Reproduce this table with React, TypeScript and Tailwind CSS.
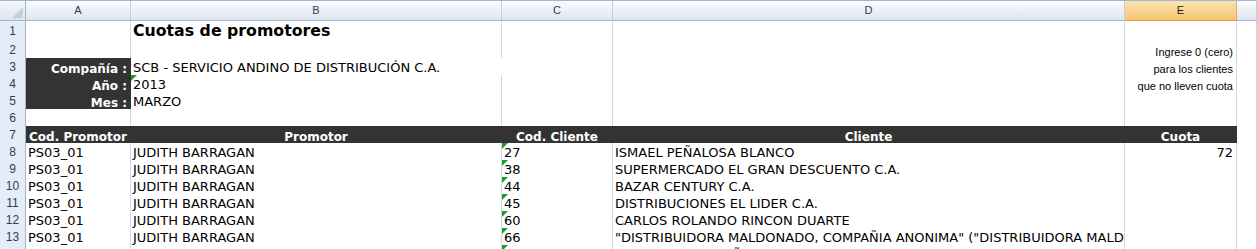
import React from "react";

type Cell = {
  text?: string;
  align?: "left" | "right" | "center";
  bold?: boolean;
  dark?: boolean;
  span?: boolean;
  tri?: boolean;
  kind?: "data" | "title" | "note";
};

const GRID = "grid grid-cols-[26px_105px_371px_111px_512px_112px_1fr]";
const DATA_FONT = { fontFamily: '"DejaVu Sans", Verdana, sans-serif' };
const NOTE_FONT = { fontFamily: '"Liberation Sans", Arial, sans-serif' };

function Triangle() {
  return (
    <svg className="absolute left-0 top-0" width="6" height="6" viewBox="0 0 6 6">
      <polygon points="0,0 6,0 0,6" fill="#1f9a2d" />
    </svg>
  );
}

function CellView({ c }: { c: Cell }) {
  const align =
    c.align === "right" ? "justify-end pr-[3px]" : c.align === "center" ? "justify-center" : "justify-start pl-[2px]";
  const colors = c.dark ? "bg-[#333333] border-[#333333] text-white" : "bg-white border-[#d0d7e5] text-black";
  const size =
    c.kind === "title"
      ? "text-[15.75px] font-bold leading-[19px]"
      : c.kind === "note"
      ? "text-[11px] leading-[13px]"
      : c.bold
      ? "text-[12px] font-bold leading-[14px]"
      : "text-[13px] leading-[15px]";
  const pad = c.kind === "title" ? "pb-[1px]" : c.kind === "note" ? "" : c.bold ? "" : "pb-[1px]";
  return (
    <div
      className={`relative flex items-end overflow-x-clip whitespace-nowrap border-r border-b ${colors} ${align} ${size} ${
        c.span ? "col-span-2" : ""
      }`}
      style={c.kind === "note" ? NOTE_FONT : DATA_FONT}
    >
      {c.tri && <Triangle />}
      <span className={pad}>{c.text ?? ""}</span>
    </div>
  );
}

function RowHeader({ n }: { n: number }) {
  return (
    <div
      className="flex items-center justify-center border-r border-b border-r-[#9eb6ce] border-b-[#c9d6e6] bg-[#e4ecf7] text-[12px] text-[#2f3e52]"
      style={NOTE_FONT}
    >
      {n}
    </div>
  );
}

function Row({ n, h, cells }: { n: number; h: string; cells: Cell[] }) {
  return (
    <div className={`${GRID} ${h}`}>
      <RowHeader n={n} />
      {cells.map((c, i) => (
        <CellView key={i} c={c} />
      ))}
    </div>
  );
}

const E: Cell = {};

const dataRows: { n: number; cod: string; cli: string; cuota?: string }[] = [
  { n: 8, cod: "27", cli: "ISMAEL PEÑALOSA BLANCO", cuota: "72" },
  { n: 9, cod: "38", cli: "SUPERMERCADO EL GRAN DESCUENTO C.A." },
  { n: 10, cod: "44", cli: "BAZAR CENTURY C.A." },
  { n: 11, cod: "45", cli: "DISTRIBUCIONES EL LIDER C.A." },
  { n: 12, cod: "60", cli: "CARLOS ROLANDO RINCON DUARTE" },
  {
    n: 13,
    cod: "66",
    cli: '"DISTRIBUIDORA MALDONADO, COMPAÑIA ANONIMA" ("DISTRIBUIDORA MALDONADO, C.A.")',
  },
  { n: 14, cod: "71", cli: "COMERCIAL LA PEÑA C.A." },
];

export default function App() {
  const colHead = (label: string, selected = false) => (
    <div
      key={label}
      className={`flex items-center justify-center border-r border-b text-[11px] ${
        selected
          ? "bg-linear-to-b from-[#fbe3b4] to-[#f3c56e] border-r-[#e7a95a] border-b-[#e79b45] text-[#1a1a1a]"
          : "bg-linear-to-b from-[#fafcfe] to-[#dde5ef] border-r-[#c3cfdf] border-b-[#9eb6ce] text-[#333d4a]"
      }`}
      style={NOTE_FONT}
    >
      {label}
    </div>
  );

  return (
    <div className="w-[1257px] h-[249px] overflow-hidden bg-white">
      {/* column headers */}
      <div className={`${GRID} h-[21px] border-t border-t-[#9eb6ce]`}>
        <div className="relative border-r border-b border-r-[#9eb6ce] border-b-[#9eb6ce] bg-linear-to-b from-[#f3f6fa] to-[#dce4ee]">
          <svg className="absolute right-[2px] bottom-[2px]" width="11" height="11" viewBox="0 0 11 11">
            <polygon points="11,0 11,11 0,11" fill="#c3cfdd" />
          </svg>
        </div>
        {colHead("A")}
        {colHead("B")}
        {colHead("C")}
        {colHead("D")}
        {colHead("E", true)}
        {colHead("")}
      </div>

      <Row n={1} h="h-[20px]" cells={[E, { text: "Cuotas de promotores", kind: "title", bold: true }, E, E, E, E]} />
      <Row
        n={2}
        h="h-[17px]"
        cells={[E, E, E, E, { text: "Ingrese 0 (cero)", kind: "note", align: "right" }, E]}
      />
      <Row
        n={3}
        h="h-[17px]"
        cells={[
          { text: "Compañía :", dark: true, bold: true, align: "right" },
          { text: "SCB - SERVICIO ANDINO DE DISTRIBUCIÓN C.A.", span: true },
          E,
          { text: "para los clientes", kind: "note", align: "right" },
          E,
        ]}
      />
      <Row
        n={4}
        h="h-[17px]"
        cells={[
          { text: "Año :", dark: true, bold: true, align: "right" },
          { text: "2013", tri: true },
          E,
          E,
          { text: "que no lleven cuota", kind: "note", align: "right" },
          E,
        ]}
      />
      <Row
        n={5}
        h="h-[17px]"
        cells={[{ text: "Mes :", dark: true, bold: true, align: "right" }, { text: "MARZO" }, E, E, E, E]}
      />
      <Row n={6} h="h-[17px]" cells={[E, E, E, E, E, E]} />
      <Row
        n={7}
        h="h-[17px]"
        cells={[
          { text: "Cod. Promotor", dark: true, bold: true, align: "center" },
          { text: "Promotor", dark: true, bold: true, align: "center" },
          { text: "Cod. Cliente", dark: true, bold: true, align: "center" },
          { text: "Cliente", dark: true, bold: true, align: "center" },
          { text: "Cuota", dark: true, bold: true, align: "center" },
          E,
        ]}
      />
      {dataRows.map((r) => (
        <Row
          key={r.n}
          n={r.n}
          h="h-[17px]"
          cells={[
            { text: "PS03_01" },
            { text: "JUDITH BARRAGAN" },
            { text: r.cod, tri: true },
            { text: r.cli },
            { text: r.cuota, align: "right" },
            E,
          ]}
        />
      ))}
    </div>
  );
}
